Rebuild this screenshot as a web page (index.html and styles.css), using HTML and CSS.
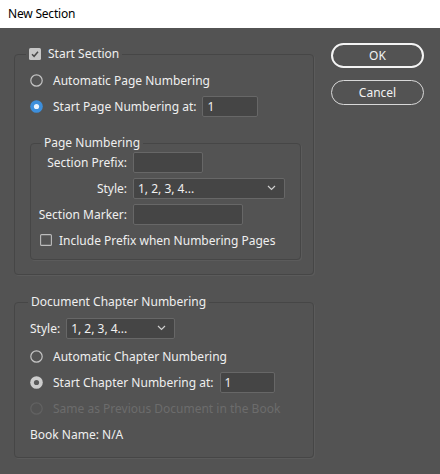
FILE: index.html
```html
<!DOCTYPE html>
<html>
<head>
<meta charset="utf-8">
<link rel="stylesheet" href="styles.css">
</head>
<body>
<div class="titlebar">New Section</div>
<div class="main">
  <div class="left">
    <fieldset class="group g1">
      <legend class="legend">
        <span class="row-inline">
          <svg class="ico" width="12" height="12" viewBox="0 0 12 12"><rect x="0" y="0" width="12" height="12" rx="1.5" fill="#c6c6c6"/><path d="M3 6.2 L5.1 8.3 L9 3.8" fill="none" stroke="#4a4a4a" stroke-width="1.5"/></svg>
          <span class="lbl">Start Section</span>
        </span>
      </legend>
      <div class="row">
        <svg class="radio" width="13" height="13" viewBox="0 0 13 13"><circle cx="6.5" cy="6.5" r="5.7" fill="none" stroke="#c4c4c4" stroke-width="1.2"/></svg>
        <span>Automatic Page Numbering</span>
      </div>
      <div class="row">
        <svg class="radio" width="13" height="13" viewBox="0 0 13 13"><circle cx="6.5" cy="6.5" r="6.3" fill="#3d8fdc"/><circle cx="6.5" cy="6.5" r="2.6" fill="#eaf3fd"/></svg>
        <span>Start Page Numbering at:</span>
        <span class="input w56">1</span>
      </div>
      <fieldset class="group inner">
        <legend class="legend small">Page Numbering</legend>
        <div class="frow">
          <span class="flabel">Section Prefix:</span>
          <span class="input w70"></span>
        </div>
        <div class="frow">
          <span class="flabel">Style:</span>
          <span class="input select w152">1, 2, 3, 4...<svg class="chev" width="9" height="6" viewBox="0 0 9 6"><path d="M1 1 L4.5 4.5 L8 1" fill="none" stroke="#cfcfcf" stroke-width="1.2"/></svg></span>
        </div>
        <div class="frow">
          <span class="flabel">Section Marker:</span>
          <span class="input w110"></span>
        </div>
        <div class="frow">
          <svg class="ico" width="12" height="12" viewBox="0 0 12 12"><rect x="0.6" y="0.6" width="10.8" height="10.8" rx="1" fill="none" stroke="#bcbcbc" stroke-width="1.1"/></svg>
          <span class="lbl2">Include Prefix when Numbering Pages</span>
        </div>
      </fieldset>
    </fieldset>

    <fieldset class="group g2">
      <legend class="legend">Document Chapter Numbering</legend>
      <div class="srow">
        <span>Style:</span>
        <span class="input select w109">1, 2, 3, 4...<svg class="chev" width="9" height="6" viewBox="0 0 9 6"><path d="M1 1 L4.5 4.5 L8 1" fill="none" stroke="#cfcfcf" stroke-width="1.2"/></svg></span>
      </div>
      <div class="row">
        <svg class="radio" width="13" height="13" viewBox="0 0 13 13"><circle cx="6.5" cy="6.5" r="5.7" fill="none" stroke="#c4c4c4" stroke-width="1.2"/></svg>
        <span>Automatic Chapter Numbering</span>
      </div>
      <div class="row">
        <svg class="radio" width="13" height="13" viewBox="0 0 13 13"><circle cx="6.5" cy="6.5" r="6.3" fill="#cdcdcd"/><circle cx="6.5" cy="6.5" r="2.6" fill="#5a5a5a"/></svg>
        <span>Start Chapter Numbering at:</span>
        <span class="input w54">1</span>
      </div>
      <div class="row disabled">
        <svg class="radio" width="13" height="13" viewBox="0 0 13 13"><circle cx="6.5" cy="6.5" r="5.7" fill="none" stroke="#626262" stroke-width="1.2"/></svg>
        <span>Same as Previous Document in the Book</span>
      </div>
      <div class="row">
        <span>Book Name: N/A</span>
      </div>
    </fieldset>
  </div>
  <div class="buttons">
    <div class="btn primary">OK</div>
    <div class="btn">Cancel</div>
  </div>
</div>
</body>
</html>
```
FILE: styles.css
```css
* { box-sizing: border-box; }
html, body { margin: 0; padding: 0; }
body {
  width: 440px;
  height: 474px;
  font-family: "Noto Sans", "Open Sans", "DejaVu Sans", sans-serif;
  font-size: 12px;
  color: #efefef;
  background: #535353;
  overflow: hidden;
  white-space: nowrap;
}
.titlebar {
  height: 28px;
  background: #ffffff;
  color: #000;
  padding-left: 8px;
  line-height: 27px;
  font-size: 12px;
  letter-spacing: -0.2px;
}
.main {
  display: flex;
  height: 446px;
  padding: 0 14px;
  background: #535353;
}
.left { width: 300px; }
.group {
  margin: 0;
  border: 1px solid #464646;
  border-radius: 4px;
  box-shadow: 1px 1px 0 #5b5b5b;
  min-width: 0;
}
.g1 {
  margin-top: 18px;
  padding: 5px 12px 14px 15px;
}
.legend {
  padding: 0 3px;
  margin-left: -4px;
  line-height: 16px;
  height: 16px;
}
.row-inline { display: flex; align-items: center; gap: 7px; }
.ico { display: block; flex: none; }
.row {
  height: 26px;
  display: flex;
  align-items: center;
}
.row .radio { flex: none; margin-right: 10px; }
.row .input { margin-left: 6px; }
.input {
  display: inline-flex;
  align-items: center;
  height: 21px;
  background: #454545;
  border: 1px solid #676767;
  border-radius: 2px;
  padding: 0 4px;
  color: #f0f0f0;
  flex: none;
}
.select { justify-content: space-between; padding-right: 8px; }
.chev { display: block; }
.w56 { width: 56px; }
.w54 { width: 55px; }
.w70 { width: 70px; }
.w110 { width: 110px; }
.w152 { width: 152px; }
.w109 { width: 109px; }
.inner {
  margin: 18px 0 0 0;
  padding: 0 12px 6px 9px;
}
.legend.small {
  line-height: 12px;
  height: 12px;
  margin-left: 1px;
}
.frow {
  height: 26px;
  display: flex;
  align-items: center;
  gap: 6px;
}
.flabel {
  width: 87px;
  flex: none;
  display: flex;
  justify-content: flex-end;
}
.lbl2 { margin-left: 1px; }
.g2 {
  margin-top: 19px;
  padding: 5px 12px 10px 15px;
}
.g2 .legend { margin-left: -2px; }
.srow {
  height: 26px;
  display: flex;
  align-items: center;
  gap: 6px;
  margin-bottom: 2px;
}
.disabled { color: #6c6c6c; }
.buttons {
  margin-left: 17px;
  padding-top: 15px;
  display: flex;
  flex-direction: column;
  gap: 12px;
}
.btn {
  width: 93px;
  height: 25px;
  border: 1px solid #d8d8d8;
  border-radius: 13px;
  display: flex;
  align-items: center;
  justify-content: center;
  color: #f2f2f2;
  font-size: 12px;
}
.btn.primary { border: 2px solid #f4f4f4; }
```
